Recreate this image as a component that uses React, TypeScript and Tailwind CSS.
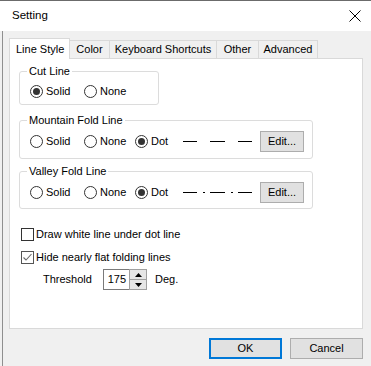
import React from 'react';

const Radio = ({ label, checked, width }: { label: string; checked?: boolean; width: string }) => (
  <span className={`flex items-center ${width}`}>
    <span className="w-[13px] h-[13px] rounded-full border border-[#333333] bg-white flex items-center justify-center">
      {checked && <span className="w-[7px] h-[7px] rounded-full bg-[#333333]" />}
    </span>
    <span className="ml-[3px]">{label}</span>
  </span>
);

const Check = ({ label, checked }: { label: string; checked?: boolean }) => (
  <div className="flex items-center h-[13px] ml-[11px]">
    <span className={`w-[13px] h-[13px] border bg-white flex items-center justify-center ${checked ? 'border-[#555555]' : 'border-[#333333]'}`}>
      {checked && (
        <svg width="11" height="11" viewBox="0 0 11 11">
          <path d="M1.5 5.5 L4 8 L9.5 2" fill="none" stroke="#6a6a6a" strokeWidth="1.1" />
        </svg>
      )}
    </span>
    <span className="ml-[2px]">{label}</span>
  </div>
);

const Dashes = ({ dotted }: { dotted?: boolean }) => (
  <svg width="70" height="2" viewBox="0 0 70 2" className="block">
    <rect x="0" y="0" width="14" height="1" fill="#000" />
    <rect x="27" y="0" width="15" height="1" fill="#000" />
    <rect x="55" y="0" width="14" height="1" fill="#000" />
    {dotted && <rect x="20" y="0" width="2" height="1" fill="#000" />}
    {dotted && <rect x="48" y="0" width="2" height="1" fill="#000" />}
  </svg>
);

const FoldGroup = ({ title, dotted, top, bottom }: { title: string; dotted?: boolean; top: string; bottom: string }) => (
  <fieldset className={`w-[294px] border border-[#dcdcdc] rounded-[3px] ${top}`}>
    <legend className="ml-[7px] px-[2px] leading-[13px]">{title}</legend>
    <div className={`flex items-center h-[21px] mt-[4px] pl-[10px] ${bottom}`}>
      <Radio label="Solid" width="w-[54px]" />
      <Radio label="None" width="w-[51px]" />
      <Radio label="Dot" checked width="w-[48px]" />
      <Dashes dotted={dotted} />
      <button className="ml-auto mr-[8px] w-[44px] h-[21px] bg-[#e1e1e1] border border-[#adadad] flex items-center justify-center">
        Edit...
      </button>
    </div>
  </fieldset>
);

export default function App() {
  const tabs = [
    { label: 'Color', w: 'w-[40px]' },
    { label: 'Keyboard Shortcuts', w: 'w-[107px]' },
    { label: 'Other', w: 'w-[42px]' },
    { label: 'Advanced', w: 'w-[59px]' },
  ];

  return (
    <div className="w-[371px] h-[366px] bg-[#f0f0f0] border-t border-[#6b6b6b] flex flex-col overflow-hidden text-[11px] text-black font-['Liberation_Sans',Arial,sans-serif]">
      {/* title bar */}
      <div className="h-[30px] bg-white flex items-center justify-between pl-[12px] pr-[10px] shrink-0">
        <span className="text-[11.5px]">Setting</span>
        <svg width="12" height="12" viewBox="0 0 12 12">
          <path d="M0.5 0.5 L11.5 11.5 M11.5 0.5 L0.5 11.5" stroke="#000" strokeWidth="1" />
        </svg>
      </div>

      <div className="flex-1 ml-[2px] border-l border-[#8f8f8f] pl-[6px] pr-[8px] pt-[7px] flex flex-col">
        {/* tabs */}
        <div className="flex items-end h-[20px]">
          <div className="relative z-10 -mb-px w-[61px] h-[21px] bg-white border border-b-0 border-[#d9d9d9] flex items-center pl-[6px]">
            Line Style
          </div>
          {tabs.map((t) => (
            <div key={t.label} className={`${t.w} h-[18px] border-t border-r border-[#d9d9d9] flex items-center justify-center`}>
              {t.label}
            </div>
          ))}
        </div>

        {/* panel */}
        <div className="w-[354px] h-[271px] bg-white border border-[#d9d9d9] flex flex-col">
          <fieldset className="ml-[9px] mt-[6px] w-[140px] border border-[#dcdcdc] rounded-[3px]">
            <legend className="ml-[7px] px-[2px] leading-[13px]">Cut Line</legend>
            <div className="flex items-center h-[14px] mt-[6px] mb-[6px] pl-[10px]">
              <Radio label="Solid" checked width="w-[54px]" />
              <Radio label="None" width="w-[51px]" />
            </div>
          </fieldset>

          <div className="ml-[9px]">
            <FoldGroup title="Mountain Fold Line" top="mt-[9px]" bottom="mb-[6px]" />
            <FoldGroup title="Valley Fold Line" dotted top="mt-[6px]" bottom="mb-[5px]" />
          </div>

          <div className="mt-[19px]">
            <Check label="Draw white line under dot line" />
          </div>
          <div className="mt-[10px]">
            <Check label="Hide nearly flat folding lines" checked />
          </div>

          <div className="mt-[5px] flex items-center h-[21px] ml-[33px]">
            <span className="w-[60px]">Threshold</span>
            <div className="flex h-[21px]">
              <div className="w-[26px] h-[21px] border border-[#7a7a7a] border-r-0 flex items-center justify-end pr-[3px] bg-white">
                175
              </div>
              <div className="w-[18px] h-[21px] flex flex-col border border-[#a0a0a0]">
                <div className="flex-1 bg-[#e6e6e6] border-b border-[#a0a0a0] flex items-center justify-center">
                  <svg width="7" height="4" viewBox="0 0 7 4">
                    <path d="M3.5 0 L7 4 L0 4 Z" fill="#000" />
                  </svg>
                </div>
                <div className="flex-1 bg-[#e6e6e6] flex items-center justify-center">
                  <svg width="7" height="4" viewBox="0 0 7 4">
                    <path d="M0 0 L7 0 L3.5 4 Z" fill="#000" />
                  </svg>
                </div>
              </div>
            </div>
            <span className="ml-[8px]">Deg.</span>
          </div>
        </div>

        {/* buttons */}
        <div className="flex justify-end gap-[8px] mt-[9px]">
          <button className="w-[73px] h-[21px] bg-[#e1e1e1] border-2 border-[#0078d7] flex items-center justify-center">
            OK
          </button>
          <button className="w-[73px] h-[21px] bg-[#e1e1e1] border border-[#adadad] flex items-center justify-center">
            Cancel
          </button>
        </div>
      </div>
    </div>
  );
}
